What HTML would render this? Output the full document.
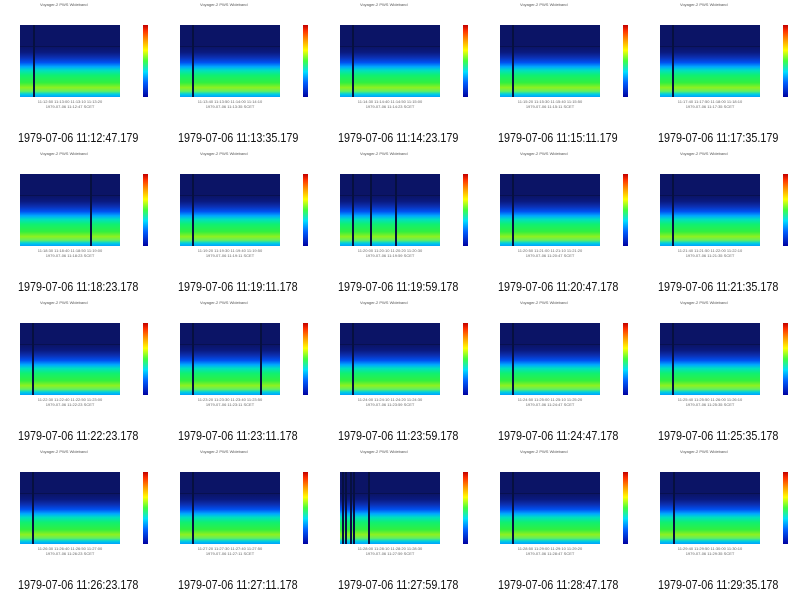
<!DOCTYPE html>
<html><head><meta charset="utf-8"><style>
body{margin:0;width:800px;height:596px;background:#fff;position:relative;overflow:hidden;font-family:"Liberation Sans",sans-serif}
.c{position:absolute;width:160px;height:149px}
.p{position:absolute;left:20px;top:25px;width:100px;height:72px;background:linear-gradient(#0b1466 0%,#0b1466 30%,#0a1a80 38%,#0c2fb0 45%,#0050f0 52%,#00a8ff 58%,#00e0c0 63%,#10f070 70%,#30f040 80%,#90f020 87%,#60f060 92%,#00d0e0 96%,#00a0ff 100%)}
.p i{position:absolute;top:0;width:2px;height:100%;background:#061040}
.p b{position:absolute;left:0;top:21px;width:100%;height:1px;background:#081050}
.cb{position:absolute;left:143px;top:25px;width:5px;height:72px;background:linear-gradient(#c00000,#ff3000 8%,#ffa000 22%,#ffff00 35%,#40ff40 50%,#00e0ff 65%,#0060ff 80%,#0000a0)}
.t{position:absolute;top:2px;left:40px;font-size:4px;color:#555}
.ax{position:absolute;left:20px;top:99px;width:100px;font-size:4px;color:#666;line-height:5px;text-align:center}
.cap{position:absolute;left:18px;top:130px;font-size:13px;color:#111;white-space:nowrap;transform:scaleX(.83);transform-origin:0 0}
</style></head><body>
<div class="c" style="left:0;top:0"><div class="t">Voyager-2 PWS Wideband</div><div class="p"><b></b><i style="left:13px"></i></div><div class="cb"></div><div class="ax">11:12:50 11:13:00 11:13:10 11:13:20<br>1979-07-06 11:12:47 SCET</div><div class="cap">1979-07-06 11:12:47.179</div></div>
<div class="c" style="left:160px;top:0"><div class="t">Voyager-2 PWS Wideband</div><div class="p"><b></b><i style="left:12px"></i></div><div class="cb"></div><div class="ax">11:13:40 11:13:50 11:14:00 11:14:10<br>1979-07-06 11:13:35 SCET</div><div class="cap">1979-07-06 11:13:35.179</div></div>
<div class="c" style="left:320px;top:0"><div class="t">Voyager-2 PWS Wideband</div><div class="p"><b></b><i style="left:12px"></i></div><div class="cb"></div><div class="ax">11:14:30 11:14:40 11:14:50 11:15:00<br>1979-07-06 11:14:23 SCET</div><div class="cap">1979-07-06 11:14:23.179</div></div>
<div class="c" style="left:480px;top:0"><div class="t">Voyager-2 PWS Wideband</div><div class="p"><b></b><i style="left:12px"></i></div><div class="cb"></div><div class="ax">11:15:20 11:15:30 11:15:40 11:15:50<br>1979-07-06 11:15:11 SCET</div><div class="cap">1979-07-06 11:15:11.179</div></div>
<div class="c" style="left:640px;top:0"><div class="t">Voyager-2 PWS Wideband</div><div class="p"><b></b><i style="left:12px"></i></div><div class="cb"></div><div class="ax">11:17:40 11:17:50 11:18:00 11:18:10<br>1979-07-06 11:17:35 SCET</div><div class="cap">1979-07-06 11:17:35.179</div></div>

<div class="c" style="left:0;top:149px"><div class="t">Voyager-2 PWS Wideband</div><div class="p"><b></b><i style="left:70px"></i></div><div class="cb"></div><div class="ax">11:18:30 11:18:40 11:18:50 11:19:00<br>1979-07-06 11:18:23 SCET</div><div class="cap">1979-07-06 11:18:23.178</div></div>
<div class="c" style="left:160px;top:149px"><div class="t">Voyager-2 PWS Wideband</div><div class="p"><b></b><i style="left:12px"></i></div><div class="cb"></div><div class="ax">11:19:20 11:19:30 11:19:40 11:19:50<br>1979-07-06 11:19:11 SCET</div><div class="cap">1979-07-06 11:19:11.178</div></div>
<div class="c" style="left:320px;top:149px"><div class="t">Voyager-2 PWS Wideband</div><div class="p"><b></b><i style="left:12px"></i><i style="left:30px"></i><i style="left:55px"></i></div><div class="cb"></div><div class="ax">11:20:00 11:20:10 11:20:20 11:20:30<br>1979-07-06 11:19:59 SCET</div><div class="cap">1979-07-06 11:19:59.178</div></div>
<div class="c" style="left:480px;top:149px"><div class="t">Voyager-2 PWS Wideband</div><div class="p"><b></b><i style="left:12px"></i></div><div class="cb"></div><div class="ax">11:20:50 11:21:00 11:21:10 11:21:20<br>1979-07-06 11:20:47 SCET</div><div class="cap">1979-07-06 11:20:47.178</div></div>
<div class="c" style="left:640px;top:149px"><div class="t">Voyager-2 PWS Wideband</div><div class="p"><b></b><i style="left:12px"></i></div><div class="cb"></div><div class="ax">11:21:40 11:21:50 11:22:00 11:22:10<br>1979-07-06 11:21:35 SCET</div><div class="cap">1979-07-06 11:21:35.178</div></div>

<div class="c" style="left:0;top:298px"><div class="t">Voyager-2 PWS Wideband</div><div class="p"><b></b><i style="left:12px"></i></div><div class="cb"></div><div class="ax">11:22:30 11:22:40 11:22:50 11:23:00<br>1979-07-06 11:22:23 SCET</div><div class="cap">1979-07-06 11:22:23.178</div></div>
<div class="c" style="left:160px;top:298px"><div class="t">Voyager-2 PWS Wideband</div><div class="p"><b></b><i style="left:12px"></i><i style="left:80px"></i></div><div class="cb"></div><div class="ax">11:23:20 11:23:30 11:23:40 11:23:50<br>1979-07-06 11:23:11 SCET</div><div class="cap">1979-07-06 11:23:11.178</div></div>
<div class="c" style="left:320px;top:298px"><div class="t">Voyager-2 PWS Wideband</div><div class="p"><b></b><i style="left:12px"></i></div><div class="cb"></div><div class="ax">11:24:00 11:24:10 11:24:20 11:24:30<br>1979-07-06 11:23:59 SCET</div><div class="cap">1979-07-06 11:23:59.178</div></div>
<div class="c" style="left:480px;top:298px"><div class="t">Voyager-2 PWS Wideband</div><div class="p"><b></b><i style="left:12px"></i></div><div class="cb"></div><div class="ax">11:24:50 11:25:00 11:25:10 11:25:20<br>1979-07-06 11:24:47 SCET</div><div class="cap">1979-07-06 11:24:47.178</div></div>
<div class="c" style="left:640px;top:298px"><div class="t">Voyager-2 PWS Wideband</div><div class="p"><b></b><i style="left:12px"></i></div><div class="cb"></div><div class="ax">11:25:40 11:25:50 11:26:00 11:26:10<br>1979-07-06 11:25:35 SCET</div><div class="cap">1979-07-06 11:25:35.178</div></div>

<div class="c" style="left:0;top:447px"><div class="t">Voyager-2 PWS Wideband</div><div class="p"><b></b><i style="left:12px"></i></div><div class="cb"></div><div class="ax">11:26:30 11:26:40 11:26:50 11:27:00<br>1979-07-06 11:26:23 SCET</div><div class="cap">1979-07-06 11:26:23.178</div></div>
<div class="c" style="left:160px;top:447px"><div class="t">Voyager-2 PWS Wideband</div><div class="p"><b></b><i style="left:12px"></i></div><div class="cb"></div><div class="ax">11:27:20 11:27:30 11:27:40 11:27:50<br>1979-07-06 11:27:11 SCET</div><div class="cap">1979-07-06 11:27:11.178</div></div>
<div class="c" style="left:320px;top:447px"><div class="t">Voyager-2 PWS Wideband</div><div class="p"><b></b><i style="left:2px"></i><i style="left:5px"></i><i style="left:10px"></i><i style="left:13px"></i><i style="left:28px"></i></div><div class="cb"></div><div class="ax">11:28:00 11:28:10 11:28:20 11:28:30<br>1979-07-06 11:27:59 SCET</div><div class="cap">1979-07-06 11:27:59.178</div></div>
<div class="c" style="left:480px;top:447px"><div class="t">Voyager-2 PWS Wideband</div><div class="p"><b></b><i style="left:12px"></i></div><div class="cb"></div><div class="ax">11:28:50 11:29:00 11:29:10 11:29:20<br>1979-07-06 11:28:47 SCET</div><div class="cap">1979-07-06 11:28:47.178</div></div>
<div class="c" style="left:640px;top:447px"><div class="t">Voyager-2 PWS Wideband</div><div class="p"><b></b><i style="left:13px"></i></div><div class="cb"></div><div class="ax">11:29:40 11:29:50 11:30:00 11:30:10<br>1979-07-06 11:29:35 SCET</div><div class="cap">1979-07-06 11:29:35.178</div></div>
</body></html>
